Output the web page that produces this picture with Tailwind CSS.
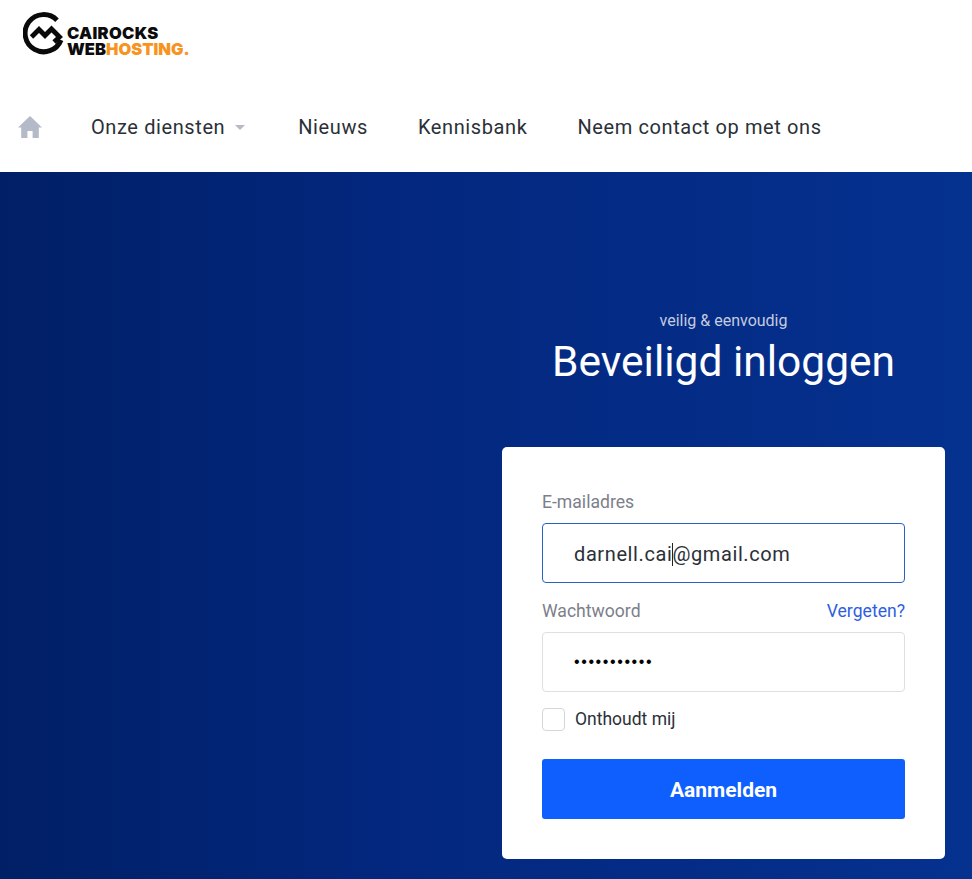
<!DOCTYPE html>
<html lang="en">
<head>
    <meta charset="UTF-8">
    <meta name="viewport" content="width=device-width, initial-scale=1.0">
    <title>Beveiligd inloggen</title>
    <script src="https://cdn.jsdelivr.net/npm/@tailwindcss/browser@4"></script>
</head>
<body class="font-['Roboto',sans-serif] h-[879px] overflow-hidden">
    <header class="bg-white h-[172px] pl-[18px]">
      <div class="flex items-start pl-[5px] pt-3 h-[58px]">
        <svg width="44" height="44" viewBox="0 0 44 44" fill="none" stroke="#0a0a0a" stroke-width="5">
          <path d="M34 8.200A18.600 18.600 0 1 0 38 28" />
          <path d="M8.500 25l7.500-7.500 6 6 6.500-6.500 8 8-5.500 5" stroke-width="4.800" stroke-linejoin="miter"/>
        </svg>
        <div class="mt-[13px] font-['Inter',sans-serif] font-black text-[16.500px] leading-[16px] text-[#0c0c0c]">
          <div class="tracking-[0.3px]">CAIROCKS</div>
          <div>WEB<span class="text-[#f7931e]">HOSTING.</span></div>
        </div>
      </div>
      <nav class="flex items-center mt-[54px] h-[30px] text-[20px] tracking-[0.6px] text-[#2b3038]">
        <svg class="w-6 h-[22px] mr-[49px]" viewBox="0 0 24 22" fill="#b4bac7"><path d="M12 0 0 11.500h3.200V22h6.200v-7h5.200v7h6.200V11.500H24z"/></svg>
        <a href="#" class="flex items-center">Onze diensten
          <span class="ml-[10px] mt-[1px] border-x-[5px] border-t-[5px] border-x-transparent border-t-[#b4bac7]"></span></a>
        <a href="#" class="ml-[53px]">Nieuws</a>
        <a href="#" class="ml-[50px]">Kennisbank</a>
        <a href="#" class="ml-[50px]">Neem contact op met ons</a>
      </nav>
    </header>

    <main class="h-[707px] bg-gradient-to-r from-[#001f66] via-[#03277e] via-40% to-[#05318f] flex flex-col items-end pr-[27px] pt-[139px]">
      <div class="w-[443px] text-center">
        <p class="text-[16px] leading-5 text-[#c3cbde]">veilig &amp; eenvoudig</p>
        <h1 class="text-[42.500px] leading-[52px] text-white mt-[5px]">Beveiligd inloggen</h1>
      </div>
      <form class="w-[443px] h-[412px] mt-[59px] bg-white rounded-[5px] px-10 pt-[43px]">
        <label class="block text-[17.600px] leading-6 text-[#7c808a]">E-mailadres</label>
        <div class="mt-[9px] h-[60px] border border-[#2a62c4] rounded-[4px] pl-[31px] pt-[2px] flex items-center text-[20px] tracking-[0.6px] text-[#2b3038]">
          <span>darnell.cai</span><span class="w-px h-[23px] bg-[#222] -mr-px"></span><span>@gmail.com</span>
        </div>
        <div class="flex justify-between mt-[16px] text-[17.600px] leading-6">
          <label class="text-[#7c808a]">Wachtwoord</label>
          <a href="#" class="text-[#2f5ee0]">Vergeten?</a>
        </div>
        <div class="mt-[9px] h-[60px] border border-[#dfdfe3] rounded-[4px] pl-[31px] flex items-center text-[16px] font-['Liberation_Sans',sans-serif] tracking-[1.600px] text-black">
          •••••••••••
        </div>
        <label class="flex items-center mt-[15px] h-[24px] text-[17.500px] text-[#2b3038]">
          <span class="w-[23px] h-[23px] border border-[#d5d6dc] rounded-[4px]"></span>
          <span class="ml-[10px]">Onthoudt mij</span>
        </label>
        <button type="button" class="block w-full h-[60px] mt-[28px] pt-[4px] bg-[#0f5fff] rounded-[3px] text-white text-[21px] font-bold">Aanmelden</button>
      </form>
    </main>
</body>
</html>
